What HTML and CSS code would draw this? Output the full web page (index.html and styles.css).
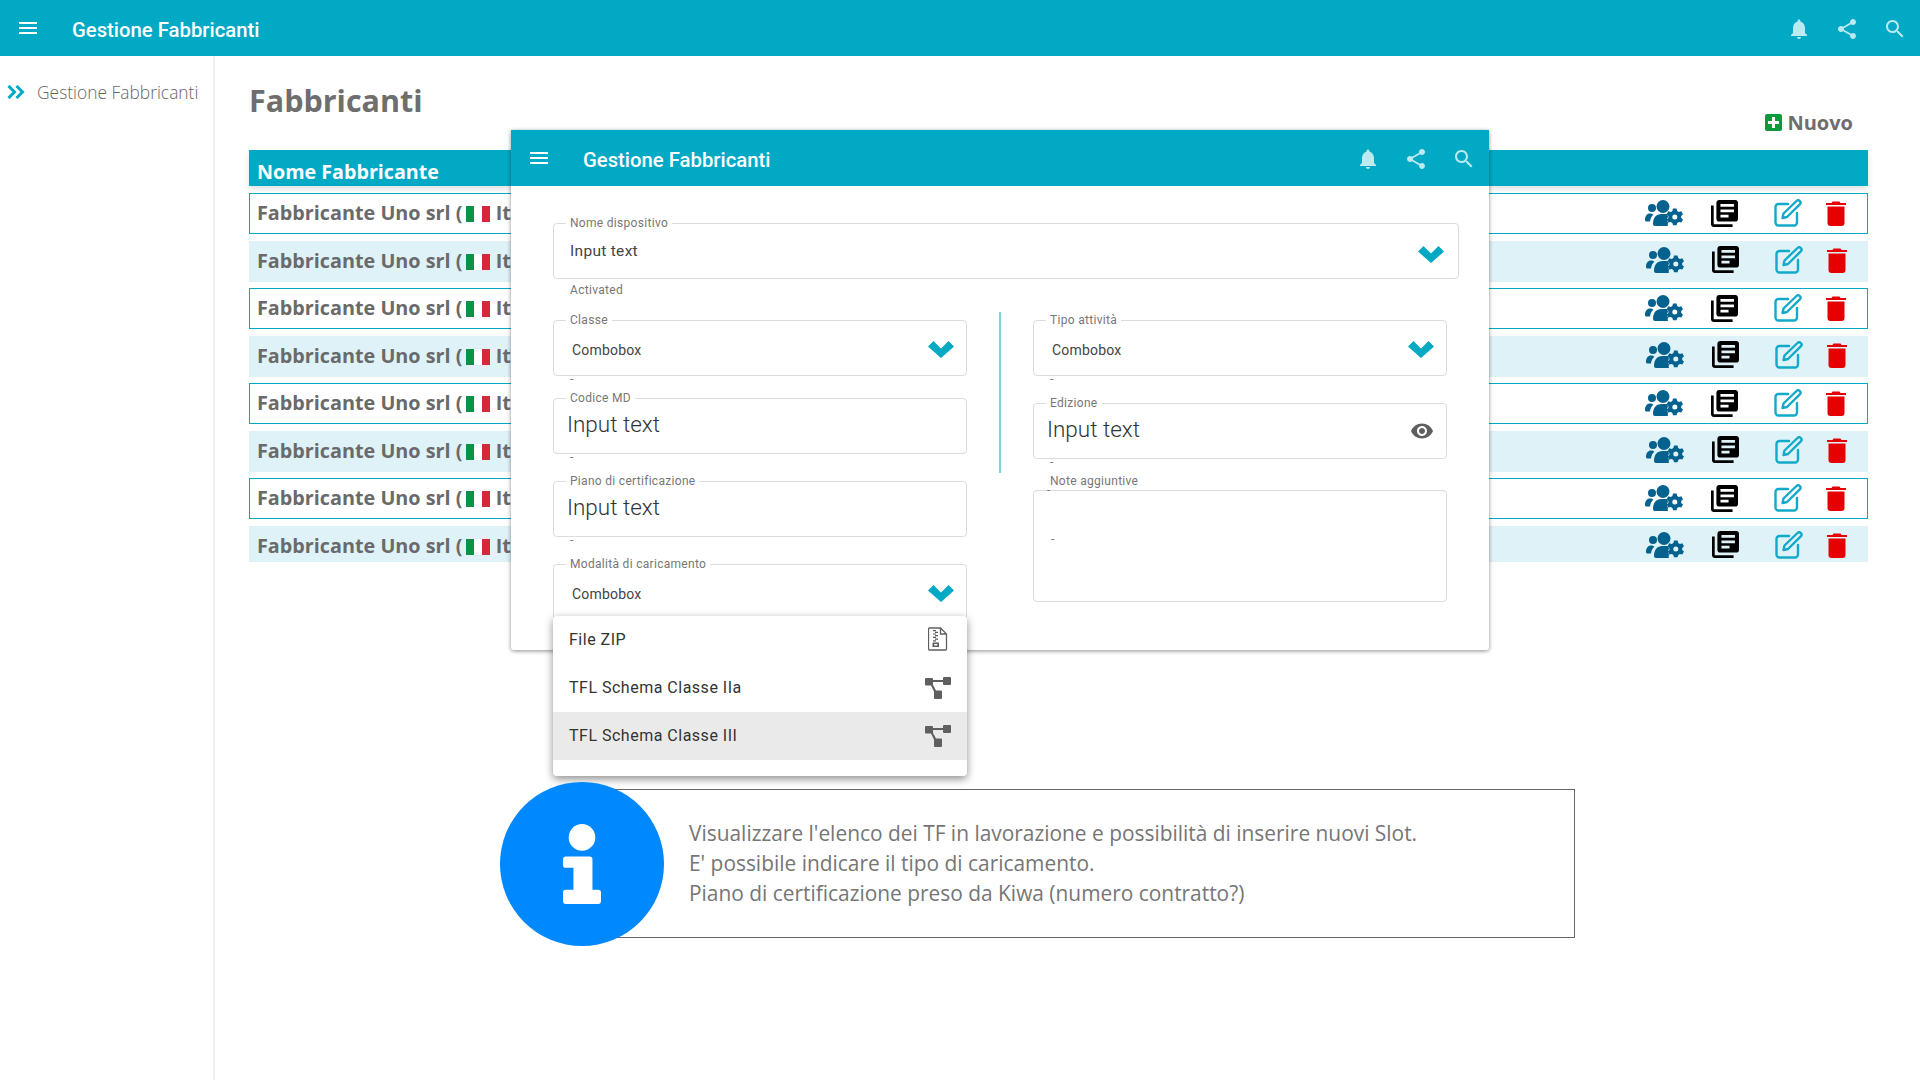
FILE: index.html
```html
<!DOCTYPE html>
<html lang="en">
<head>
    <meta charset="UTF-8">
    <title>Gestione Fabbricanti</title>
    <link rel="stylesheet" href="styles.css">
</head>
<body>
    <svg class="sprite" width="0" height="0">
        <symbol id="i-menu" viewBox="0 0 24 24"><path d="M3 18h18v-2H3v2zm0-5h18v-2H3v2zm0-7v2h18V6H3z"/></symbol>
        <symbol id="i-bell" viewBox="0 0 24 24"><path d="M12 22c1.1 0 2-.9 2-2h-4c0 1.1.89 2 2 2zm6-6v-5c0-3.07-1.64-5.64-4.5-6.32V4c0-.83-.67-1.5-1.5-1.5s-1.5.67-1.5 1.5v.68C7.63 5.36 6 7.92 6 11v5l-2 2v1h16v-1l-2-2z"/></symbol>
        <symbol id="i-share" viewBox="0 0 24 24"><path d="M18 16.08c-.76 0-1.44.3-1.96.77L8.91 12.7c.05-.23.09-.46.09-.7s-.04-.47-.09-.7l7.05-4.11c.54.5 1.25.81 2.04.81 1.66 0 3-1.34 3-3s-1.34-3-3-3-3 1.34-3 3c0 .24.04.47.09.7L8.04 9.81C7.5 9.31 6.79 9 6 9c-1.66 0-3 1.34-3 3s1.34 3 3 3c.79 0 1.5-.31 2.04-.81l7.12 4.16c-.05.21-.08.43-.08.65 0 1.61 1.31 2.92 2.92 2.92 1.61 0 2.92-1.31 2.92-2.92s-1.31-2.92-2.92-2.92z"/></symbol>
        <symbol id="i-search" viewBox="0 0 24 24"><path d="M15.5 14h-.79l-.28-.27C15.41 12.59 16 11.11 16 9.5 16 5.91 13.09 3 9.5 3S3 5.91 3 9.5 5.91 16 9.5 16c1.61 0 3.09-.59 4.23-1.57l.27.28v.79l5 4.99L20.49 19l-4.99-5zm-6 0C7.01 14 5 11.99 5 9.5S7.01 5 9.5 5 14 7.01 14 9.5 11.99 14 9.5 14z"/></symbol>
        <symbol id="i-eye" viewBox="0 0 24 24"><path d="M12 4.5C7 4.5 2.73 7.61 1 12c1.73 4.39 6 7.5 11 7.5s9.27-3.11 11-7.5c-1.73-4.39-6-7.5-11-7.5zM12 17c-2.76 0-5-2.24-5-5s2.24-5 5-5 5 2.24 5 5-2.24 5-5 5zm0-8c-1.66 0-3 1.34-3 3s1.34 3 3 3 3-1.34 3-3-1.34-3-3-3z"/></symbol>
        <symbol id="i-books" viewBox="2 2 20 20"><path d="M4 6H2v14c0 1.1.9 2 2 2h14v-2H4V6zm16-4H8c-1.1 0-2 .9-2 2v12c0 1.1.9 2 2 2h12c1.1 0 2-.9 2-2V4c0-1.1-.9-2-2-2zm-1 9H9V9h10v2zm-4 4H9v-2h6v2zm4-8H9V5h10v2z"/></symbol>
        <symbol id="i-chevron" viewBox="0 0 26 18"><path d="M0 6.500 5.500 1 13 8.500 20.500 1 26 6.500 13 18z"/></symbol>
        <symbol id="i-edit" viewBox="0 0 28 28"><path fill="none" stroke="currentColor" stroke-width="2.400" stroke-linecap="round" d="M14 5H4.500A3 3 0 0 0 1.500 8v15.500a3 3 0 0 0 3 3H20a3 3 0 0 0 3-3V14"/><path fill="none" stroke="currentColor" stroke-width="2.400" stroke-linejoin="round" d="M9.500 14.500 22.500 2a2.300 2.300 0 0 1 3.300 3.300L13 18l-4.500 1z"/></symbol>
        <symbol id="i-trash" viewBox="0 0 20 26"><path d="M6.500 1.500h7l1 1.500H20v2H0V3h5.500zM1.500 6.500h17V23a3 3 0 0 1-3 3h-11a3 3 0 0 1-3-3z"/></symbol>
        <symbol id="i-users" viewBox="0 0 38 26"><circle cx="7" cy="8" r="4"/><path d="M0 20c0-4 2-6.500 5-6.500 1.500 0 2.600.5 3.400 1.300C6.500 16.500 5.300 18.500 5 21.500H2c-1.200 0-2-.5-2-1.500z"/><circle cx="18" cy="6.500" r="6.500"/><path d="M8 24c0-6 3-10 8.500-10h4c.7 0 1.300.1 2 .3-.1 1 .2 2 .8 2.500-1.700 1-1.700 4.800 0 5.800-.5.600-.7 1.600-.4 3.400H10c-1.200 0-2-.8-2-2z"/><path fill-rule="evenodd" d="M28 8.500h3.600l.6 2.400 1.700 1 2.400-.7 1.700 3-1.800 1.700v2l1.800 1.700-1.700 3-2.400-.7-1.700 1-.6 2.400H28l-.6-2.400-1.700-1-2.400.7-1.700-3 1.800-1.700v-2l-1.800-1.700 1.700-3 2.400.7 1.700-1zM29.800 14.500a2.500 2.500 0 1 0 0 5 2.500 2.500 0 0 0 0-5z"/></symbol>
        <symbol id="i-schema" viewBox="0 0 26 22"><path d="M1 1h6a1 1 0 0 1 1 1v1h10V1a1 1 0 0 1 1-1h6a1 1 0 0 1 1 1v6a1 1 0 0 1-1 1h-6a1 1 0 0 1-1-1V5H8v3l3 5.500h5a1 1 0 0 1 1 1V21a1 1 0 0 1-1 1h-6a1 1 0 0 1-1-1v-6.500L6 8.500H1a1 1 0 0 1-1-1V2a1 1 0 0 1 1-1z"/></symbol>
        <symbol id="i-zip" viewBox="0 0 20 24"><path fill="none" stroke="currentColor" stroke-width="1.300" d="M1.500 1h11l6 6v15a1 1 0 0 1-1 1h-16a1 1 0 0 1-1-1V2a1 1 0 0 1 1-1zM12.500 1v6h6"/><path d="M5 3h3v1.200H5zm2 1.700h3v1.200H7zM5 6.400h3v1.200H5zm2 1.700h3v1.200H7zM5 9.800h3V11H5zm2 1.700h3v1.200H7zM5 13.200h3v1.200H5zm-.5 2.300h6.500V20H4.500zm1.700 1.400v1.700h3.100v-1.700z"/></symbol>
    </svg>

    <header class="app-bar">
        <svg class="bar-menu"><use href="#i-menu"/></svg>
        <span class="bar-title">Gestione Fabbricanti</span>
        <span class="bar-actions">
            <svg><use href="#i-bell"/></svg>
            <svg><use href="#i-share"/></svg>
            <svg><use href="#i-search"/></svg>
        </span>
    </header>

    <div class="layout">
        <nav class="sidebar">
            <span class="nav-arrows">
                <svg viewBox="0 0 18 14"><path d="M1.500 1 7.500 7 1.500 13M9.500 1 15.500 7 9.500 13"/></svg>
            </span>
            <span class="nav-label">Gestione Fabbricanti</span>
        </nav>

        <main class="content">
            <div class="page-head">
                <h1>Fabbricanti</h1>
                <a class="new-btn">
                    <span class="new-icon"></span>
                    Nuovo
                </a>
            </div>

            <div class="table-head">Nome Fabbricante</div>
            <div class="table-rows">
                <div class="row">
                    <span class="row-name">Fabbricante Uno srl ( <span class="flag"><i></i><i></i><i></i></span> Italia )</span>
                    <span class="row-icons">
                        <svg class="ic-users"><use href="#i-users"/></svg>
                        <svg class="ic-books"><use href="#i-books"/></svg>
                        <svg class="ic-edit"><use href="#i-edit"/></svg>
                        <svg class="ic-trash"><use href="#i-trash"/></svg>
                    </span>
                </div>
                <div class="row">
                    <span class="row-name">Fabbricante Uno srl ( <span class="flag"><i></i><i></i><i></i></span> Italia )</span>
                    <span class="row-icons">
                        <svg class="ic-users"><use href="#i-users"/></svg>
                        <svg class="ic-books"><use href="#i-books"/></svg>
                        <svg class="ic-edit"><use href="#i-edit"/></svg>
                        <svg class="ic-trash"><use href="#i-trash"/></svg>
                    </span>
                </div>
                <div class="row">
                    <span class="row-name">Fabbricante Uno srl ( <span class="flag"><i></i><i></i><i></i></span> Italia )</span>
                    <span class="row-icons">
                        <svg class="ic-users"><use href="#i-users"/></svg>
                        <svg class="ic-books"><use href="#i-books"/></svg>
                        <svg class="ic-edit"><use href="#i-edit"/></svg>
                        <svg class="ic-trash"><use href="#i-trash"/></svg>
                    </span>
                </div>
                <div class="row">
                    <span class="row-name">Fabbricante Uno srl ( <span class="flag"><i></i><i></i><i></i></span> Italia )</span>
                    <span class="row-icons">
                        <svg class="ic-users"><use href="#i-users"/></svg>
                        <svg class="ic-books"><use href="#i-books"/></svg>
                        <svg class="ic-edit"><use href="#i-edit"/></svg>
                        <svg class="ic-trash"><use href="#i-trash"/></svg>
                    </span>
                </div>
                <div class="row">
                    <span class="row-name">Fabbricante Uno srl ( <span class="flag"><i></i><i></i><i></i></span> Italia )</span>
                    <span class="row-icons">
                        <svg class="ic-users"><use href="#i-users"/></svg>
                        <svg class="ic-books"><use href="#i-books"/></svg>
                        <svg class="ic-edit"><use href="#i-edit"/></svg>
                        <svg class="ic-trash"><use href="#i-trash"/></svg>
                    </span>
                </div>
                <div class="row">
                    <span class="row-name">Fabbricante Uno srl ( <span class="flag"><i></i><i></i><i></i></span> Italia )</span>
                    <span class="row-icons">
                        <svg class="ic-users"><use href="#i-users"/></svg>
                        <svg class="ic-books"><use href="#i-books"/></svg>
                        <svg class="ic-edit"><use href="#i-edit"/></svg>
                        <svg class="ic-trash"><use href="#i-trash"/></svg>
                    </span>
                </div>
                <div class="row">
                    <span class="row-name">Fabbricante Uno srl ( <span class="flag"><i></i><i></i><i></i></span> Italia )</span>
                    <span class="row-icons">
                        <svg class="ic-users"><use href="#i-users"/></svg>
                        <svg class="ic-books"><use href="#i-books"/></svg>
                        <svg class="ic-edit"><use href="#i-edit"/></svg>
                        <svg class="ic-trash"><use href="#i-trash"/></svg>
                    </span>
                </div>
                <div class="row">
                    <span class="row-name">Fabbricante Uno srl ( <span class="flag"><i></i><i></i><i></i></span> Italia )</span>
                    <span class="row-icons">
                        <svg class="ic-users"><use href="#i-users"/></svg>
                        <svg class="ic-books"><use href="#i-books"/></svg>
                        <svg class="ic-edit"><use href="#i-edit"/></svg>
                        <svg class="ic-trash"><use href="#i-trash"/></svg>
                    </span>
                </div>
            </div>
        </main>
    </div>

    <!-- modal over the table -->
    <section class="modal">
        <header class="app-bar modal-bar">
            <svg class="bar-menu"><use href="#i-menu"/></svg>
            <span class="bar-title">Gestione Fabbricanti</span>
            <span class="bar-actions">
                <svg><use href="#i-bell"/></svg>
                <svg><use href="#i-share"/></svg>
                <svg><use href="#i-search"/></svg>
            </span>
        </header>

        <div class="modal-body">
            <div class="field field-top">
                <span class="field-label">Nome dispositivo</span>
                <span class="value-small">Input text</span>
                <svg class="chevron"><use href="#i-chevron"/></svg>
            </div>
            <div class="helper helper-activated">Activated</div>

            <div class="columns">
                <div class="col col-left">
                    <div class="field">
                        <span class="field-label">Classe</span>
                        <span class="value-combo">Combobox</span>
                        <svg class="chevron"><use href="#i-chevron"/></svg>
                    </div>
                    <div class="helper">-</div>
                    <div class="field field-codice">
                        <span class="field-label">Codice MD</span>
                        <span class="value-large">Input text</span>
                    </div>
                    <div class="helper">-</div>
                    <div class="field field-piano">
                        <span class="field-label">Piano di certificazione</span>
                        <span class="value-large">Input text</span>
                    </div>
                    <div class="helper">-</div>
                    <div class="field field-piano">
                        <span class="field-label">Modalità di caricamento</span>
                        <span class="value-combo">Combobox</span>
                        <svg class="chevron"><use href="#i-chevron"/></svg>
                    </div>

                    <ul class="dropdown">
                        <li>File ZIP <svg class="ic-zip"><use href="#i-zip"/></svg></li>
                        <li>TFL Schema Classe IIa <svg class="ic-schema"><use href="#i-schema"/></svg></li>
                        <li class="selected">TFL Schema Classe III <svg class="ic-schema"><use href="#i-schema"/></svg></li>
                    </ul>
                </div>

                <div class="col-divider"></div>

                <div class="col">
                    <div class="field">
                        <span class="field-label">Tipo attività</span>
                        <span class="value-combo">Combobox</span>
                        <svg class="chevron"><use href="#i-chevron"/></svg>
                    </div>
                    <div class="helper">-</div>
                    <div class="field field-edizione">
                        <span class="field-label">Edizione</span>
                        <span class="value-large">Input text</span>
                        <svg class="eye"><use href="#i-eye"/></svg>
                    </div>
                    <div class="helper">-</div>
                    <div class="field field-note">
                        <span class="field-label">Note aggiuntive</span>
                        <span class="note-dash note-dash-top">-</span>
                        <span class="note-dash note-dash-mid">-</span>
                    </div>
                </div>
            </div>
        </div>
    </section>

    <!-- info callout -->
    <aside class="info">
        <div class="info-circle">
            <svg viewBox="0 0 40 84"><circle cx="20" cy="14" r="14"/><path d="M7 34h21a3 3 0 0 1 3 3v32h6a3 3 0 0 1 3 3v9a3 3 0 0 1-3 3H3a3 3 0 0 1-3-3v-9a3 3 0 0 1 3-3h8V46H3a3 3 0 0 1-3-3v-6a3 3 0 0 1 3-3z"/></svg>
        </div>
        <p>Visualizzare l'elenco dei TF in lavorazione e possibilità di inserire nuovi Slot.<br>
        E' possibile indicare il tipo di caricamento.<br>
        Piano di certificazione preso da Kiwa (numero contratto?)</p>
    </aside>
</body>
</html>
```

FILE: styles.css
```css
* {
    box-sizing: border-box;
}
body {
    margin: 0;
    width: 1920px;
    height: 1080px;
    position: relative;
    overflow: hidden;
    background-color: #fff;
    font-family: "Open Sans", sans-serif;
    color: #6e6e6e;
}
.sprite {
    position: absolute;
}

/* top bar */
.app-bar {
    height: 56px;
    display: flex;
    align-items: center;
    background-color: #02a9c5;
    color: #fff;
    font-family: Roboto, sans-serif;
}
.bar-menu {
    width: 24px;
    height: 24px;
    margin-left: 16px;
    margin-right: 32px;
    fill: #fff;
}
.bar-title {
    margin-top: 3px;
    font-size: 20.300px;
    font-weight: 500;
}
.bar-actions {
    margin-left: auto;
    margin-right: 13px;
    margin-top: 1px;
    display: flex;
    gap: 24px;
}
.bar-actions svg {
    width: 24px;
    height: 24px;
    fill: #bde9f0;
}

/* page */
.layout {
    display: flex;
    height: 1024px;
}
.sidebar {
    width: 215px;
    flex: none;
    border-right: 2px solid #f0f0f0;
    padding: 24px 0 0 7px;
    display: flex;
    align-items: flex-start;
}
.nav-arrows svg {
    width: 18px;
    height: 14px;
    margin-top: 5px;
    fill: none;
    stroke: #02a9c5;
    stroke-width: 3;
}
.nav-label {
    margin-left: 12px;
    font-size: 17.400px;
    font-weight: 300;
    color: #666;
    white-space: nowrap;
}
.content {
    flex: 1;
    padding-left: 34px;
    padding-right: 52px;
}
.page-head {
    height: 94px;
    position: relative;
}
h1 {
    margin: 0;
    padding-top: 22px;
    font-size: 30.500px;
    font-weight: 700;
    line-height: 44px;
    color: #6e6e6e;
}
.new-btn {
    position: absolute;
    right: 15px;
    top: 53px;
    display: flex;
    align-items: center;
    gap: 5px;
    font-size: 20px;
    font-weight: 700;
    color: #6e6e6e;
}
.new-icon {
    width: 17px;
    height: 17px;
    border-radius: 2px;
    background:
        linear-gradient(#fff, #fff) center / 11px 3px no-repeat,
        linear-gradient(#fff, #fff) center / 3px 11px no-repeat,
        #0b9a3c;
}
.table-head {
    height: 36px;
    padding: 8px 0 0 8px;
    background-color: #02a9c5;
    color: #fff;
    font-size: 19.700px;
    font-weight: 700;
    line-height: 27px;
    box-shadow: 0 3px 6px rgba(0, 0, 0, 0.12);
}
.table-rows {
    margin-top: 7px;
    display: flex;
    flex-direction: column;
    gap: 6.500px;
}
.row {
    height: 41px;
    display: flex;
    align-items: flex-start;
    padding-left: 8px;
}
.row:nth-child(odd) {
    border: 1px solid #02a9c5;
    padding-left: 7px;
}
.row:nth-child(even) {
    background-color: #def2f8;
}
.row:last-child {
    height: 36px;
}
.row-name {
    font-size: 19.800px;
    font-weight: 700;
    line-height: 37px;
    color: #6a6a6a;
    white-space: nowrap;
}
.row:nth-child(even) .row-name {
    line-height: 39px;
}
.flag {
    display: inline-flex;
    vertical-align: -2px;
    margin: 0 1px 0 -2px;
}
.flag i {
    width: 8px;
    height: 16px;
}
.flag i:nth-child(1) {
    background-color: #0a9246;
}
.flag i:nth-child(2) {
    background-color: #fff;
}
.flag i:nth-child(3) {
    background-color: #d6283a;
}
.row-icons {
    margin-left: auto;
    display: flex;
    align-items: center;
    height: 38px;
    padding-right: 21px;
}
.ic-users {
    width: 38px;
    height: 26px;
    fill: #05628f;
    margin-right: 28px;
}
.ic-books {
    width: 27px;
    height: 27px;
    fill: #000;
    margin-right: 36px;
}
.ic-edit {
    width: 28px;
    height: 28px;
    color: #13a9c9;
    margin-right: 24px;
}
.ic-trash {
    width: 20px;
    height: 26px;
    fill: #e60000;
}

/* modal */
.modal {
    position: absolute;
    left: 511px;
    top: 130px;
    width: 978px;
    height: 520px;
    background-color: #fff;
    box-shadow: 0 1px 4px rgba(0, 0, 0, 0.45);
    border-radius: 0 0 3px 3px;
}
.modal-bar .bar-menu {
    margin-right: 32px;
}
.modal-body {
    padding: 37px 30px 0 42px;
}
.field {
    position: relative;
    height: 56px;
    border: 1px solid #dcdcdc;
    border-radius: 4px;
    display: flex;
    align-items: center;
    font-family: Roboto, sans-serif;
}
.field-label {
    position: absolute;
    top: -8px;
    left: 12px;
    padding: 0 4px;
    background-color: #fff;
    font-size: 12px;
    line-height: 14px;
    letter-spacing: 0.3px;
    color: #777;
    white-space: nowrap;
}
.value-small {
    padding-left: 16px;
    font-size: 15.500px;
    letter-spacing: 0.3px;
    color: #444;
}
.value-combo {
    padding-left: 18px;
    margin-top: 4px;
    font-size: 14px;
    letter-spacing: 0.2px;
    color: #444;
}
.value-large {
    padding-left: 13px;
    margin-top: -5px;
    font-size: 22.500px;
    font-weight: 300;
    color: #333;
}
.chevron {
    position: absolute;
    right: 12px;
    top: 19px;
    width: 26px;
    height: 18px;
    fill: #02a9c5;
}
.field-top .chevron {
    right: 14px;
    top: 21px;
}
.eye {
    position: absolute;
    right: 12px;
    top: 15px;
    width: 24px;
    height: 24px;
    fill: #5f5f5f;
}
.helper {
    height: 16px;
    padding-left: 17px;
    font-family: Roboto, sans-serif;
    font-size: 12px;
    line-height: 6px;
    letter-spacing: 0.3px;
    color: #777;
}
.helper-activated {
    padding-top: 4px;
    height: 41px;
    line-height: 14px;
}
.columns {
    display: flex;
}
.col {
    width: 414px;
    position: relative;
}
.col-left {
    width: 414px;
}
.col-divider {
    width: 2px;
    height: 161px;
    margin: -8px 32px 0;
    background-color: #7fd4e3;
}
.field-codice {
    margin-top: 6px;
}
.field-piano {
    margin-top: 11px;
}
.field-edizione {
    margin-top: 11px;
}
.field-note {
    margin-top: 15px;
    height: 112px;
}
.field-note .field-label {
    top: -17px;
}
.note-dash {
    position: absolute;
    left: 17px;
    font-size: 12px;
    color: #777;
}
.note-dash-top {
    top: -8px;
    left: 13px;
}
.note-dash-mid {
    top: 41px;
}

/* dropdown open on Modalita */
.dropdown {
    position: absolute;
    left: 0;
    top: 296px;
    width: 414px;
    height: 160px;
    margin: 0;
    padding: 0;
    list-style: none;
    background-color: #fff;
    border-radius: 4px;
    box-shadow: 0 3px 8px rgba(0, 0, 0, 0.45);
    font-family: Roboto, sans-serif;
    font-size: 16px;
    letter-spacing: 0.5px;
    color: #333;
}
.dropdown li {
    height: 48px;
    display: flex;
    align-items: center;
    justify-content: space-between;
    padding: 0 16px 2px;
}
.dropdown .selected {
    background-color: #eaeaea;
}
.ic-zip {
    width: 20px;
    height: 24px;
    color: #5f5f5f;
    fill: #5f5f5f;
    margin-right: 3px;
}
.ic-schema {
    width: 26px;
    height: 22px;
    margin-top: 2px;
    fill: #5f5f5f;
}

/* info callout */
.info {
    position: absolute;
    left: 582px;
    top: 789px;
    width: 993px;
    height: 149px;
    border: 1px solid #666;
    background-color: #fff;
    display: flex;
    align-items: center;
    padding-left: 106px;
}
.info-circle {
    position: absolute;
    left: -83px;
    top: -8px;
    width: 164px;
    height: 164px;
    border-radius: 50%;
    background-color: #0088ff;
    display: flex;
    align-items: center;
    justify-content: center;
}
.info-circle svg {
    width: 38px;
    height: 88px;
    fill: #fff;
}
.info p {
    margin: -2px 0 0;
    font-size: 20.900px;
    line-height: 30px;
    color: #767676;
}
```
